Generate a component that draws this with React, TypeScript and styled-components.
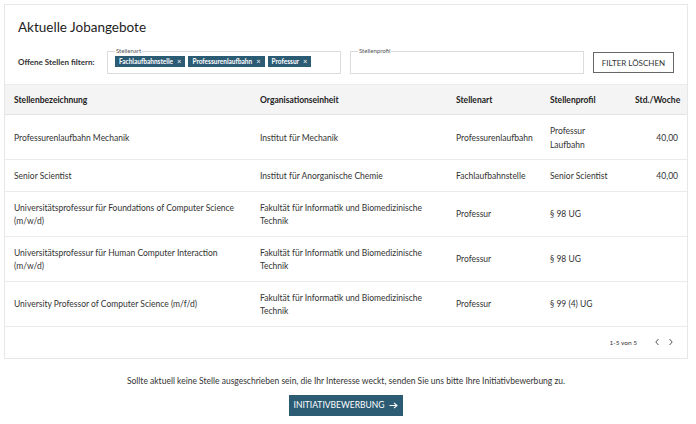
import * as React from 'react';
import styled, { createGlobalStyle } from 'styled-components';

const GlobalStyle = createGlobalStyle`
    html, body {
        margin: 0;
        padding: 0;
        background: #ffffff;
    }
    body {
        font-family: Lato, "Open Sans", sans-serif;
        color: #333;
    }
`;

const Page = styled.div`
    width: 696px;
    height: 424px;
    padding: 4px 8px 0 4px;
    box-sizing: border-box;
`;

const Card = styled.section`
    border: 1px solid #e7e7e7;
    background: #fff;
`;

const CardHeader = styled.div`
    padding: 12px 13px 9px 13px;
    height: 79px;
    box-sizing: border-box;
`;

const Title = styled.h2`
    margin: 0 0 11px 0;
    font-size: 13.5px;
    font-weight: 400;
    color: #222;
    line-height: 20px;
`;

const FilterRow = styled.div`
    display: flex;
    align-items: flex-end;
    gap: 9px;
`;

const FilterLabel = styled.span`
    font-size: 8px;
    font-weight: 700;
    color: #333;
    width: 80px;
    white-space: nowrap;
    align-self: center;
    padding-top: 2px;
`;

const Fieldset = styled.fieldset`
    margin: 0;
    width: 234px;
    height: 26px;
    box-sizing: border-box;
    border: 1px solid #dcdcdc;
    padding: 0 7px 0 7px;
    display: flex;
    align-items: flex-start;
    gap: 3px;
`;

const Legend = styled.legend`
    font-size: 6px;
    color: #555;
    padding: 0 1px;
    line-height: 6px;
`;

const Chip = styled.span`
    display: inline-flex;
    align-items: center;
    gap: 4px;
    height: 11px;
    padding: 0 4px 0 4px;
    margin-top: 2px;
    background: #2c5b74;
    color: #fff;
    font-size: 6.5px;
    font-weight: 700;
    white-space: nowrap;
`;

const ChipX = styled.span`
    font-weight: 400;
    font-size: 7.5px;
    line-height: 1;
`;

const ClearButton = styled.button`
    width: 81px;
    height: 21px;
    margin-bottom: 1px;
    border: 1px solid #666;
    background: #fff;
    font-family: inherit;
    font-size: 8px;
    color: #333;
    text-transform: uppercase;
    padding: 0;
    cursor: pointer;
`;

const Grid = styled.div`
    display: grid;
    grid-template-columns: 246px 196px 94px 85px 1fr;
`;

const HeadRow = styled(Grid)`
    background: #f4f4f4;
    border-top: 1px solid #ececec;
    border-bottom: 1px solid #e4e4e4;
    height: 31px;
    box-sizing: border-box;
    align-items: center;
`;

const HeadCell = styled.div<{ $right?: boolean }>`
    padding: 0 10px 0 9px;
    font-size: 8.5px;
    font-weight: 700;
    color: #222;
    text-align: ${p => (p.$right ? 'right' : 'left')};
`;

const Row = styled(Grid)`
    border-bottom: 1px solid #ebebeb;
    align-items: center;
`;

const Cell = styled.div<{ $right?: boolean }>`
    padding: 10px 9px 7px 9px;
    font-size: 8.5px;
    line-height: 13.5px;
    color: #333;
    text-align: ${p => (p.$right ? 'right' : 'left')};
`;

const Pager = styled.div`
    height: 31px;
    display: flex;
    justify-content: flex-end;
    align-items: center;
    padding-right: 13px;
    gap: 17px;
    font-size: 6.5px;
    color: #333;
`;

const PagerArrows = styled.div`
    display: flex;
    gap: 6px;
`;

const Footer = styled.div`
    display: flex;
    flex-direction: column;
    align-items: center;
    padding-top: 17px;
    gap: 9px;
`;

const FooterText = styled.p`
    margin: 0;
    font-size: 8.5px;
    color: #333;
`;

const CtaButton = styled.button`
    display: inline-flex;
    align-items: center;
    justify-content: center;
    gap: 5px;
    width: 114px;
    height: 21px;
    border: 0;
    background: #2c5b74;
    color: #fff;
    font-family: inherit;
    font-size: 8.5px;
    text-transform: uppercase;
    padding: 0;
`;

const jobs = [
    { title: 'Professurenlaufbahn Mechanik', org: 'Institut für Mechanik', art: 'Professurenlaufbahn', profil: 'Professur Laufbahn', std: '40,00' },
    { title: 'Senior Scientist', org: 'Institut für Anorganische Chemie', art: 'Fachlaufbahnstelle', profil: 'Senior Scientist', std: '40,00' },
    { title: 'Universitätsprofessur für Foundations of Computer Science (m/w/d)', org: 'Fakultät für Informatik und Biomedizinische Technik', art: 'Professur', profil: '§ 98 UG', std: '' },
    { title: 'Universitätsprofessur für Human Computer Interaction (m/w/d)', org: 'Fakultät für Informatik und Biomedizinische Technik', art: 'Professur', profil: '§ 98 UG', std: '' },
    { title: 'University Professor of Computer Science (m/f/d)', org: 'Fakultät für Informatik und Biomedizinische Technik', art: 'Professur', profil: '§ 99 (4) UG', std: '' },
];

const Chevron = ({ dir }: { dir: 'left' | 'right' }) => (
    <svg width="7" height="8" viewBox="0 0 7 8" fill="none" stroke="#555" strokeWidth="1">
        {dir === 'left' ? <path d="M4.5 1 L1.8 4 L4.5 7" /> : <path d="M2.5 1 L5.2 4 L2.5 7" />}
    </svg>
);

export default function App() {
    return (
        <Page>
            <GlobalStyle />
            <Card>
                <CardHeader>
                    <Title>Aktuelle Jobangebote</Title>
                    <FilterRow>
                        <FilterLabel>Offene Stellen filtern:</FilterLabel>
                        <Fieldset>
                            <Legend>Stellenart</Legend>
                            {['Fachlaufbahnstelle', 'Professurenlaufbahn', 'Professur'].map(c => (
                                <Chip key={c}>{c}<ChipX>×</ChipX></Chip>
                            ))}
                        </Fieldset>
                        <Fieldset>
                            <Legend>Stellenprofil</Legend>
                        </Fieldset>
                        <ClearButton>Filter löschen</ClearButton>
                    </FilterRow>
                </CardHeader>
                <HeadRow>
                    <HeadCell>Stellenbezeichnung</HeadCell>
                    <HeadCell>Organisationseinheit</HeadCell>
                    <HeadCell>Stellenart</HeadCell>
                    <HeadCell>Stellenprofil</HeadCell>
                    <HeadCell $right>Std./Woche</HeadCell>
                </HeadRow>
                {jobs.map(j => (
                    <Row key={j.title}>
                        <Cell>{j.title}</Cell>
                        <Cell>{j.org}</Cell>
                        <Cell>{j.art}</Cell>
                        <Cell>{j.profil}</Cell>
                        <Cell $right>{j.std}</Cell>
                    </Row>
                ))}
                <Pager>
                    <span>1-5 von 5</span>
                    <PagerArrows>
                        <Chevron dir="left" />
                        <Chevron dir="right" />
                    </PagerArrows>
                </Pager>
            </Card>
            <Footer>
                <FooterText>
                    Sollte aktuell keine Stelle ausgeschrieben sein, die Ihr Interesse weckt, senden Sie uns bitte Ihre Initiativbewerbung zu.
                </FooterText>
                <CtaButton>
                    Initiativbewerbung
                    <svg width="9" height="7" viewBox="0 0 9 7" fill="none" stroke="#fff" strokeWidth="1.1">
                        <path d="M0.5 3.5 H8 M5 0.8 L8 3.5 L5 6.2" />
                    </svg>
                </CtaButton>
            </Footer>
        </Page>
    );
}
